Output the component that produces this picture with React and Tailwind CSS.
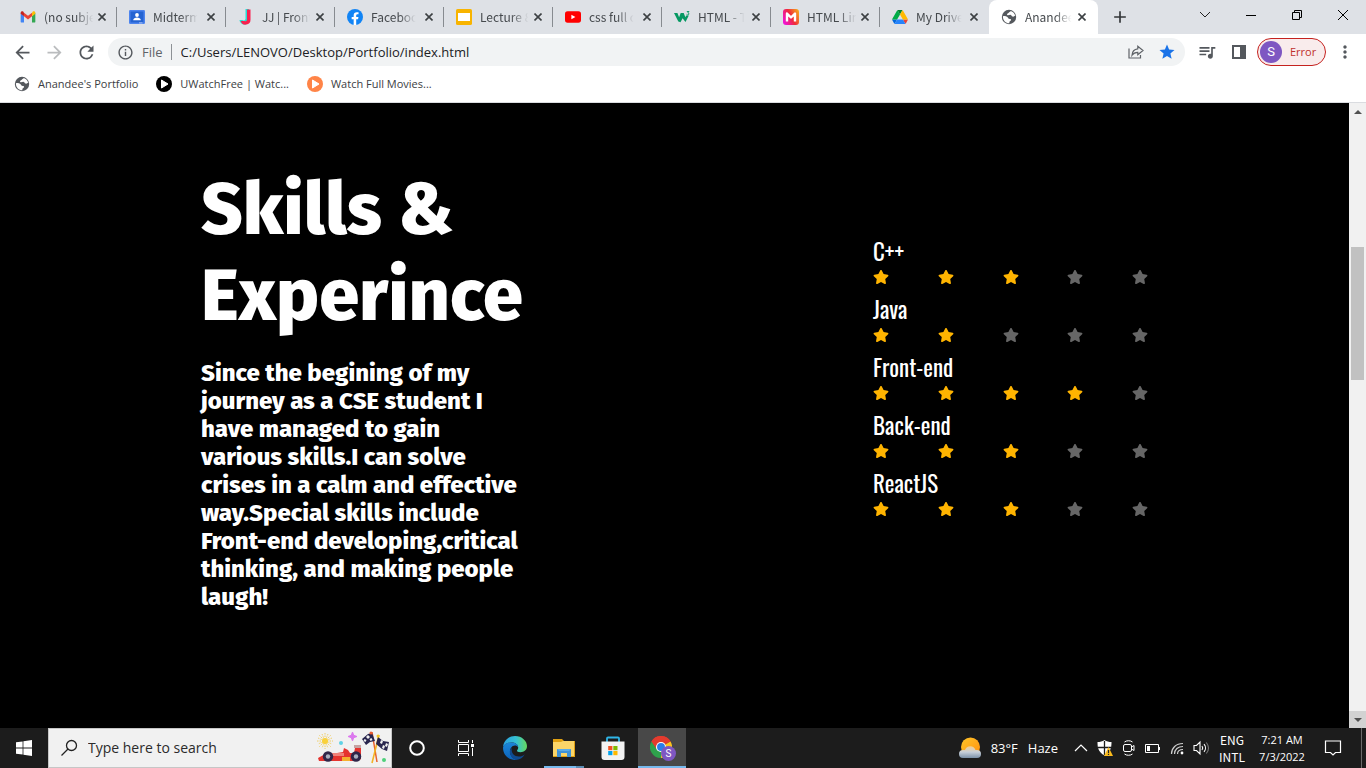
import React from "react";
import {
  MdAdd,
  MdArrowBack,
  MdArrowForward,
  MdInfoOutline,
  MdMoreVert,
  MdQueueMusic,
  MdRefresh,
  MdStar,
} from "react-icons/md";
import { FaStar } from "react-icons/fa";

/* ---------- favicons ---------- */

function Gmail() {
  return (
    <svg viewBox="0 0 24 24" className="size-4">
      <path d="M1 6v13c0 .8.6 1.400 1.400 1.400H6V11z" fill="#4285f4" />
      <path d="M23 6v13c0 .8-.6 1.400-1.400 1.400H18V11z" fill="#34a853" />
      <path d="M18 5.500V11l5-3.800V5.700c0-2-2.200-3.100-3.800-1.900z" fill="#fbbc04" />
      <path d="M6 11V5.500l6 4.500 6-4.500V11l-6 4.600z" fill="#ea4335" />
      <path d="M1 5.700v1.500L6 11V5.500L4.800 3.800C3.200 2.600 1 3.700 1 5.700z" fill="#c5221f" />
    </svg>
  );
}

function Classroom() {
  return (
    <svg viewBox="0 0 16 16" className="size-4">
      <rect y="1" width="16" height="14" rx="1.200" fill="#4d84ee" />
      <rect x="1.500" y="2.500" width="13" height="11" fill="#2463d2" />
      <circle cx="8" cy="6" r="1.900" fill="#fff" />
      <path d="M4.200 11.200c0-1.700 2-2.600 3.800-2.600s3.800.9 3.800 2.600z" fill="#fff" />
      <path d="M10 13.500h3.500v.8H10z" fill="#c6d7fa" />
    </svg>
  );
}

function LetterJ() {
  return (
    <svg viewBox="0 0 16 16" className="size-4">
      <path d="M7.500 0h3.500v10.500a4.500 4.500 0 0 1-9.500.5h3a2 2 0 0 0 3-1z" fill="#25e0d5" />
      <path d="M9 .5h3.500v10a5 5 0 0 1-9.800 1.500h3.800c1.300.9 2.500 0 2.500-1.800z" fill="#f9214f" />
    </svg>
  );
}

function Facebook() {
  return (
    <svg viewBox="0 0 24 24" className="size-4">
      <circle cx="12" cy="12" r="12" fill="#1184f5" />
      <path d="M16.600 15.500l.6-3.500h-3.400V9.800c0-1 .5-1.900 2-1.900h1.500v-3s-1.400-.2-2.700-.2c-2.800 0-4.600 1.700-4.600 4.700V12H7v3.500h3V24h3.800v-8.500z" fill="#fff" />
    </svg>
  );
}

function Slides() {
  return (
    <svg viewBox="0 0 16 16" className="size-4">
      <rect width="16" height="16" rx="1.600" fill="#f8b400" />
      <rect x="2" y="4" width="12" height="8" fill="#fff" />
    </svg>
  );
}

function YouTube() {
  return (
    <svg viewBox="0 0 16 16" className="size-4">
      <rect y="2.300" width="16" height="11.400" rx="2.600" fill="#f00" />
      <path d="M6.400 5.700v4.600l4-2.300z" fill="#fff" />
    </svg>
  );
}

function W3() {
  return (
    <svg viewBox="0 0 16 16" className="size-4">
      <path d="M0 4h3.400l1.700 4.200L6.700 4h3l1.700 4.200.8-1.700h2.600L11.500 13 8.600 9.200 6.500 13.200 4.300 12.500z" fill="#059862" />
      <path d="M12.800 2.500h2.200l-1.200 1.400c1.500 0 1.600 2-.1 2-.5 0-.9-.2-1.100-.5" fill="none" stroke="#059862" strokeWidth=".9" />
    </svg>
  );
}

function MBadge() {
  return (
    <svg viewBox="0 0 16 16" className="size-4">
      <defs>
        <linearGradient id="mBadge" x1="0" y1=".7" x2="1" y2=".2">
          <stop offset="0" stopColor="#f012d4" />
          <stop offset=".5" stopColor="#f02b3b" />
          <stop offset="1" stopColor="#f7a51b" />
        </linearGradient>
      </defs>
      <rect width="16" height="16" rx="3" fill="url(#mBadge)" />
      <path d="M4 12.500V4.500l4 4 4-4v8" fill="none" stroke="#fff" strokeWidth="2.400" strokeLinejoin="round" />
    </svg>
  );
}

function Drive() {
  return (
    <svg viewBox="0 0 87.300 78" className="h-[14px] w-4">
      <path d="m6.600 66.850 3.850 6.650c.8 1.400 1.950 2.500 3.300 3.300l13.750-23.800H0c0 1.550.4 3.100 1.200 4.500z" fill="#0066da" />
      <path d="M43.650 25 29.900 1.200c-1.350.8-2.500 1.900-3.300 3.300L1.200 48.500A9.060 9.060 0 0 0 0 53h27.500z" fill="#00ac47" />
      <path d="M73.550 76.800c1.350-.8 2.500-1.900 3.300-3.300l1.600-2.750L86.100 57.500c.8-1.400 1.200-2.950 1.200-4.500H59.800l5.850 11.500z" fill="#ea4335" />
      <path d="M43.650 25 57.400 1.200C56.050.4 54.500 0 52.900 0H34.400c-1.600 0-3.150.45-4.500 1.200z" fill="#00832d" />
      <path d="M59.800 53H27.500L13.750 76.800c1.350.8 2.900 1.200 4.500 1.200h50.800c1.600 0 3.150-.45 4.500-1.200z" fill="#2684fc" />
      <path d="m73.400 26.500-12.700-22c-.8-1.400-1.950-2.500-3.300-3.300L43.650 25 59.800 53h27.450c0-1.550-.4-3.100-1.200-4.500z" fill="#ffba00" />
    </svg>
  );
}

function Globe() {
  return (
    <svg viewBox="0 0 16 16" className="size-4">
      <circle cx="8" cy="8" r="7.200" fill="#54585d" />
      <path d="M8.200 3.200C9.300 2.600 9.800 2 9.700 1.900c2.300.7 4 2.500 4.500 4.700-.8.900-1.800 1.300-2.700 1-1-.4-.8-1.400-1.800-1.700-1.200-.3-1.900.6-3 .4-.9-.2-.9-1.300-.1-1.700.6-.3 1.200-.9 1.600-1.400z" fill="#fff" />
      <path d="M1.900 7.200c1.600-.3 3.400-.2 4.400.7.900.7.700 1.600 1.700 1.900 1 .3 1.900.1 2.100 1 .2 1-1.100 1.200-1.600 2-.3.500-.2 1 0 1.500-3.500.1-6.700-2.800-6.600-7.100z" fill="#fff" />
    </svg>
  );
}

function PlayDisc({ color }) {
  return (
    <svg viewBox="0 0 16 16" className="size-4">
      <circle cx="8" cy="8" r="8" fill={color} />
      <path d="M5.500 4v8L12 8z" fill="#fff" stroke="#fff" strokeLinejoin="round" />
    </svg>
  );
}

function CloseGlyph() {
  return (
    <svg viewBox="0 0 8 8" className="size-2">
      <path d="M.5.5l7 7M7.500.5l-7 7" stroke="#3c4043" strokeWidth="1.600" />
    </svg>
  );
}

/* ---------- browser ---------- */

const TABS = [
  { title: "(no subje", icon: <Gmail /> },
  { title: "Midterm", icon: <Classroom /> },
  { title: "JJ | Front", icon: <LetterJ /> },
  { title: "Faceboo", icon: <Facebook /> },
  { title: "Lecture 8", icon: <Slides /> },
  { title: "css full c", icon: <YouTube /> },
  { title: "HTML - T", icon: <W3 /> },
  { title: "HTML Lin", icon: <MBadge /> },
  { title: "My Drive", icon: <Drive /> },
  { title: "Anandee", icon: <Globe />, active: true },
];

function Tab({ tab, divider }) {
  return (
    <div
      className={
        tab.active
          ? "flex h-[34px] w-[109px] items-center rounded-t-lg bg-white pr-3 pl-3"
          : "relative flex h-[34px] w-[109px] items-center pr-[11px] pl-3"
      }
    >
      <button className="flex min-w-0 flex-1 items-center gap-2 text-left">
        <span className="flex size-4 shrink-0 items-center justify-center">{tab.icon}</span>
        <span className="flex-1 text-[12px] leading-4 whitespace-nowrap text-[#45494d] [mask-image:linear-gradient(to_right,#000_60%,transparent_95%)]">
          {tab.title}
        </span>
      </button>
      <button aria-label={"Close " + tab.title} className="ml-2 flex size-2 items-center justify-center">
        <CloseGlyph />
      </button>
      {divider && <span className="absolute top-[7px] right-0 h-5 w-px bg-[#878b90]" />}
    </div>
  );
}

function TabStrip() {
  return (
    <div className="flex h-[34px] items-center bg-[#dee1e6] pl-2 font-['Noto_Sans_CJK_SC',sans-serif]">
      <div className="flex">
        {TABS.map((tab, i) => (
          <Tab key={tab.title} tab={tab} divider={i < 8} />
        ))}
      </div>
      <button aria-label="New tab" className="ml-3 flex size-5 items-center justify-center text-[#333639]">
        <MdAdd className="size-5" />
      </button>
      <div className="mb-1 ml-auto flex">
        <button aria-label="Search tabs" className="flex h-6 w-[46px] items-center justify-center">
          <svg viewBox="0 0 12 8" className="h-2 w-3" fill="none" stroke="#222">
            <path d="M1 1l5 5 5-5" />
          </svg>
        </button>
        <button aria-label="Minimize" className="flex h-6 w-[46px] items-center justify-center">
          <svg viewBox="0 0 10 10" className="size-[10px]">
            <path d="M0 5.500h10" stroke="#000" />
          </svg>
        </button>
        <button aria-label="Restore" className="flex h-6 w-[46px] items-center justify-center">
          <svg viewBox="0 0 10 10" className="size-[10px]" fill="none" stroke="#000">
            <path d="M.5 2.500h7v7h-7zM2.500 2.500v-2h7v7h-2" />
          </svg>
        </button>
        <button aria-label="Close window" className="flex h-6 w-[46px] items-center justify-center">
          <svg viewBox="0 0 10 10" className="size-[10px]">
            <path d="M0 0l10 10M10 0L0 10" stroke="#000" />
          </svg>
        </button>
      </div>
    </div>
  );
}

function Toolbar() {
  return (
    <div className="flex h-9 items-center bg-white pr-3 pl-3 text-[#54585d]">
      <button aria-label="Back" className="flex w-5 justify-center">
        <MdArrowBack className="size-[21px] shrink-0" />
      </button>
      <button aria-label="Forward" className="ml-3 flex w-5 justify-center text-[#babcbe]">
        <MdArrowForward className="size-[21px] shrink-0" />
      </button>
      <button aria-label="Reload" className="ml-3 flex w-5 justify-center">
        <MdRefresh className="size-[21px] shrink-0" />
      </button>
      <div className="ml-3 flex h-7 flex-1 items-center rounded-full bg-[#f1f3f4] pr-[9px] pl-[9px]">
        <MdInfoOutline className="size-[17px]" />
        <span className="ml-2 text-[13px] leading-5 text-[#5f6368]">File</span>
        <span className="ml-2 h-4 w-px bg-[#8d9195]" />
        <input
          aria-label="Address"
          defaultValue="C:/Users/LENOVO/Desktop/Portfolio/index.html"
          className="ml-[9px] min-w-0 flex-1 bg-transparent text-[13px] leading-5 text-[#202124] outline-none"
        />
        <button aria-label="Share" className="flex w-4 justify-center">
          <svg viewBox="0 0 16 16" className="size-4" fill="none" stroke="#5f6368" strokeWidth="1.200">
            <path d="M1 4.500V14h11.500v-3" />
            <path d="M9.800 2.200v2.600C6 5.200 4.200 7.600 4 11.200c1.300-2 3.200-2.900 5.800-2.900v2.500L15 6.500z" />
          </svg>
        </button>
        <button aria-label="Bookmark this page" className="ml-[14px] flex w-[18px] justify-center text-[#1a73e8]">
          <MdStar className="size-[18px]" />
        </button>
      </div>
      <button aria-label="Media control" className="ml-3 flex w-5 justify-center">
        <MdQueueMusic className="size-5" />
      </button>
      <button aria-label="Side panel" className="ml-[14px] flex w-4 justify-center">
        <svg viewBox="0 0 16 16" className="size-4">
          <path d="M1 1h14v14H1z" fill="#54585d" />
          <path d="M3 3h6v10H3z" fill="#fff" />
        </svg>
      </button>
      <button className="ml-[10px] flex h-7 w-[69px] items-center rounded-full border border-[#c5221f] bg-[#f9ecec] pl-[2px]">
        <span className="flex size-[22px] items-center justify-center rounded-full bg-[#7e57c2] font-['Roboto',sans-serif] text-[13px] leading-4 text-white">
          S
        </span>
        <span className="ml-2 text-[11px] leading-4 text-[#c0312c]">Error</span>
      </button>
      <button aria-label="Menu" className="ml-[10px] flex w-[18px] justify-center">
        <MdMoreVert className="size-5 shrink-0" />
      </button>
    </div>
  );
}

function Bookmarks() {
  const items = [
    { label: "Anandee's Portfolio", icon: <Globe /> },
    { label: "UWatchFree | Watc...", icon: <PlayDisc color="#000" /> },
    { label: "Watch Full Movies...", icon: <PlayDisc color="#ff8447" /> },
  ];
  return (
    <nav className="flex h-[33px] items-center gap-[18px] border-b border-[#dadce0] bg-white pb-1 pl-[14px]">
      {items.map((b) => (
        <a key={b.label} href="#" className="flex items-center gap-2 text-[11px] leading-4 text-[#3c4043]">
          {b.icon}
          {b.label}
        </a>
      ))}
    </nav>
  );
}

/* ---------- portfolio page ---------- */

const SKILLS = [
  { name: "C++", score: 3 },
  { name: "Java", score: 2 },
  { name: "Front-end", score: 4 },
  { name: "Back-end", score: 3 },
  { name: "ReactJS", score: 3 },
];

function Portfolio() {
  return (
    <main className="flex flex-1 items-start justify-between bg-black px-[201px] pt-16 pb-16 text-white">
      <section className="w-[340px] font-['Fira_Sans','Noto_Sans',sans-serif] font-extrabold">
        <h1 className="text-[72px] leading-[86px]">
          Skills &amp;
          <br />
          Experince
        </h1>
        <p className="mt-5 text-[24px] leading-7 whitespace-nowrap">
          Since the begining of my
          <br />
          journey as a CSE student I
          <br />
          have managed to gain
          <br />
          various skills.I can solve
          <br />
          crises in a calm and effective
          <br />
          way.Special skills include
          <br />
          Front-end developing,critical
          <br />
          thinking, and making people
          <br />
          laugh!
        </p>
      </section>
      <ul className="mt-[66px] w-[275px]">
        {SKILLS.map((skill) => (
          <li key={skill.name} className="h-[58px]">
            <h2 className="font-['Oswald','Noto_Sans_CJK_SC',sans-serif] text-[23px] leading-9">{skill.name}</h2>
            <div className="flex justify-between" role="img" aria-label={skill.score + " of 5 stars"}>
              {[1, 2, 3, 4, 5].map((n) => (
                <FaStar key={n} className={n <= skill.score ? "size-4 text-[#ffb400]" : "size-4 text-[#666666]"} />
              ))}
            </div>
          </li>
        ))}
      </ul>
    </main>
  );
}

function Scrollbar() {
  return (
    <div className="flex w-[17px] shrink-0 flex-col bg-[#f1f1f1]" aria-hidden="true">
      <div className="flex h-[17px] items-center justify-center">
        <svg viewBox="0 0 8 4" className="h-1 w-2">
          <path d="M0 4l4-4 4 4z" fill="#505050" />
        </svg>
      </div>
      <div className="flex flex-1 flex-col items-center">
        <div className="basis-[21.5%]" />
        <div className="w-[13px] basis-[22.5%] bg-[#c1c1c1]" />
      </div>
      <div className="flex h-[17px] items-center justify-center bg-[#d2d2d2]">
        <svg viewBox="0 0 8 4" className="h-1 w-2">
          <path d="M0 0l4 4 4-4z" fill="#505050" />
        </svg>
      </div>
    </div>
  );
}

/* ---------- taskbar ---------- */

function RaceArt() {
  return (
    <svg viewBox="0 0 74 34" className="h-[34px] w-[74px]">
      <g stroke="#efc64a" strokeWidth=".8">
        <path d="M8 2v16M0 10h16M2.300 4.300l11.400 11.400M13.700 4.300L2.300 15.700M5 3l6 14M11 3L5 17M1 7l14 6M15 7L1 13" strokeDasharray="1.500 1" />
      </g>
      <circle cx="8" cy="10" r="3" fill="#f9d13c" />
      <path d="M35.500 1l1.200 3.300L40 5.500l-3.300 1.200-1.200 3.300-1.200-3.300L31 5.500l3.300-1.200z" fill="#dc78ee" stroke="#dc78ee" />
      <circle cx="24" cy="12" r="2" fill="#5fd2e6" />
      <path d="M1 27l9-5h10l6-1 1-4 4 2 2 3 4 0 1-5h6v11l-3 2H2z" fill="#e5342f" />
      <path d="M37 14h7v3h-7z" fill="#c6a3a3" />
      <path d="M14 22h13v3H14z" fill="#ef8178" />
      <path d="M25 26h8v4h-8z" fill="#f5b02f" />
      <circle cx="11" cy="25.500" r="5.200" fill="#302649" />
      <circle cx="11" cy="25.500" r="2.200" fill="#aab0c0" />
      <circle cx="39" cy="25.500" r="5.200" fill="#302649" />
      <circle cx="39" cy="25.500" r="2.200" fill="#aab0c0" />
      <path d="M55 1l5 30" stroke="#e8622c" strokeWidth="1.500" />
      <path d="M62 4l-7 28" stroke="#f3b324" strokeWidth="1.500" />
      <path d="M55 2l-4 1-6 5 4 6 4-3 5-1zM61 6l5 4 6 1-2 9-5-2-6-5z" fill="#28254d" />
      <path d="M51 4l2 2-2 2-2-2zM47.500 8l2 1-1 2-2-1zM54.500 7l1 2-2 1-1-2zM64 9l2 1-1 3-2-1zM69 12l2 1-1 3-2-1zM66 14l2 1-1 3-2-1z" fill="#f1f1f1" />
      <circle cx="54" cy="2" r="1.500" fill="#ee5b31" />
      <circle cx="61" cy="5" r="1.500" fill="#f3c524" />
      <circle cx="67" cy="29" r="2" fill="#4fd07a" />
    </svg>
  );
}

function EdgeLogo() {
  return (
    <svg viewBox="0 0 24 24" className="size-6">
      <defs>
        <linearGradient id="edgeTop" x1="0" y1=".4" x2="1" y2=".4">
          <stop offset="0" stopColor="#2a9fe0" />
          <stop offset=".55" stopColor="#35c1d3" />
          <stop offset="1" stopColor="#65d85c" />
        </linearGradient>
        <linearGradient id="edgeLow" x1="0" y1="0" x2="0" y2="1">
          <stop offset="0" stopColor="#1b86d8" />
          <stop offset="1" stopColor="#0c62ba" />
        </linearGradient>
      </defs>
      <path d="M0 11C.7 4.800 5.500 0 12 0c7 0 12 5 12 10 0 4-3 6.200-6.500 6.200-2.400 0-3.500-.8-3.500-1.500 0-.6 1.200-1.200 1.200-3.200 0-3-3-5-6.700-5C4.500 6.500 1.500 8.500 0 11z" fill="url(#edgeTop)" />
      <path d="M0 11.500C1 8.500 4 6.500 8.500 6.500c3.700 0 6.700 2 6.700 5-.6-1.500-2-2-3.200-2-3 0-5 3-5 6 0 4.500 3.500 8 7.500 8.200-1 .3-1.700.3-2.500.3-7 0-12-5.500-12-12.500z" fill="url(#edgeLow)" />
      <path d="M8.800 12c-1 5 2.700 8.500 7 8.500 2.500 0 4.500-.9 6-2.300C20 21.500 17 23.500 14 23.700c-4-.2-7.200-3.700-7.200-8.200 0-1.500.8-2.800 2-3.500z" fill="#0f4a90" />
    </svg>
  );
}

function FolderLogo() {
  return (
    <svg viewBox="0 0 22 18" className="h-[18px] w-[22px]">
      <path d="M0 0h9l2 2h11v16H0z" fill="#e0a012" />
      <path d="M0 3h8l2-1h11v15H0z" fill="#fbd568" />
      <path d="M4 10h14v8h-4v-4H8v4H4z" fill="#3f92d6" />
      <path d="M4 10h14l-2 2H6z" fill="#5aace8" />
    </svg>
  );
}

function StoreLogo() {
  return (
    <svg viewBox="0 0 24 24" className="size-6">
      <path d="M6 6V2.500C6 1.800 6.500 1.500 7 1.500h10c.6 0 1 .4 1 1V6" fill="none" stroke="#2fb6e8" strokeWidth="1.800" />
      <path d="M.5 5.500h23V21a3 3 0 0 1-3 3h-17a3 3 0 0 1-3-3z" fill="#f3f3f3" />
      <path d="M7.200 10h4.200v4.200H7.200z" fill="#f25022" />
      <path d="M12.300 10h4.200v4.200h-4.200z" fill="#7fba00" />
      <path d="M7.200 15h4.200v4.200H7.200z" fill="#00a4ef" />
      <path d="M12.300 15h4.200v4.200h-4.200z" fill="#ffb900" />
    </svg>
  );
}

function ChromeLogo() {
  return (
    <span className="relative flex size-6">
      <svg viewBox="0 0 24 24" className="size-[22px]">
        <path d="M12 12L1.600 6A12 12 0 0 1 22.400 6z" fill="#e33b2e" />
        <path d="M12 12l10.400-6A12 12 0 0 1 12 24z" fill="#fcc31e" />
        <path d="M12 12v12A12 12 0 0 1 1.600 6z" fill="#2ea24c" />
        <path d="M12 6.500h10.700A12 12 0 0 0 1.600 6l5.600 8.500z" fill="#e33b2e" />
        <circle cx="12" cy="12" r="5.500" fill="#fff" />
        <circle cx="12" cy="12" r="4.300" fill="#2b7de9" />
      </svg>
      <span className="absolute -right-[2px] -bottom-px flex size-[15px] items-center justify-center rounded-full bg-[#7e57c2] font-['Roboto',sans-serif] text-[10px] leading-3 text-white">
        S
      </span>
    </span>
  );
}

function TaskButton({ label, children, state }) {
  return (
    <button
      aria-label={label}
      className={
        state === "active"
          ? "relative flex h-10 w-12 items-center justify-center bg-[#484848]"
          : "relative flex h-10 w-12 items-center justify-center"
      }
    >
      {children}
      {state === "active" && <span className="absolute inset-x-0 bottom-0 h-[2px] bg-[#76b9ed]" />}
      {state === "open" && (
        <span className="absolute right-1 bottom-0 left-1 flex h-[2px]">
          <span className="flex-1 bg-[#76b9ed]" />
          <span className="w-2 bg-[#5a8cb3]" />
        </span>
      )}
    </button>
  );
}

function Taskbar() {
  return (
    <footer className="flex h-10 items-center bg-[#1c1c1c] text-white">
      <button aria-label="Start" className="flex h-10 w-12 items-center justify-center">
        <svg viewBox="0 0 16 16" className="size-4" fill="#fff">
          <path d="M0 2.300l6.600-.9v6.200H0zM7.400 1.300L16 0v7.600H7.400zM0 8.400h6.600v6.200L0 13.700zM7.400 8.400H16V16l-8.600-1.200z" />
        </svg>
      </button>
      <label className="flex h-10 w-[344px] items-center border border-[#c6c6c6] bg-[#f1f1f1] pl-[11px]">
        <svg viewBox="0 0 18 18" className="size-[18px] shrink-0" fill="none" stroke="#222" strokeWidth="1.300">
          <circle cx="11.500" cy="6.500" r="5" />
          <path d="M8 10l-6.500 6.500" />
        </svg>
        <input
          aria-label="Search"
          placeholder="Type here to search"
          className="ml-[10px] min-w-0 flex-1 bg-transparent text-[14px] leading-5 outline-none placeholder:text-[#2b2b2b]"
        />
        <RaceArt />
      </label>
      <div className="ml-px flex gap-px">
        <TaskButton label="Cortana">
          <svg viewBox="0 0 16 16" className="size-4">
            <circle cx="8" cy="8" r="6.800" fill="none" stroke="#fff" strokeWidth="2" />
          </svg>
        </TaskButton>
        <TaskButton label="Task view">
          <svg viewBox="0 0 16 16" className="size-4" fill="none" stroke="#fff">
            <path d="M.5 0v2.500h10V0M.5 4.500h10v7H.5zM.5 16v-2.500h10V16M14.500 0v3M14.500 8v8" />
            <path d="M13 4h3v3h-3z" fill="#fff" stroke="none" />
          </svg>
        </TaskButton>
        <TaskButton label="Edge"><EdgeLogo /></TaskButton>
        <TaskButton label="File Explorer" state="open"><FolderLogo /></TaskButton>
        <TaskButton label="Store"><StoreLogo /></TaskButton>
        <TaskButton label="Chrome" state="active"><ChromeLogo /></TaskButton>
      </div>

      <div className="ml-auto flex items-center">
        <button className="flex items-center text-[13px] leading-5">
          <svg viewBox="0 0 22 22" className="size-[22px]">
            <defs>
              <linearGradient id="sun" x1="0" y1="0" x2="1" y2="1">
                <stop offset="0" stopColor="#ffc629" />
                <stop offset="1" stopColor="#ff8f0e" />
              </linearGradient>
              <linearGradient id="haze" x1="0" y1="0" x2="0" y2="1">
                <stop offset="0" stopColor="#f6cf8e" />
                <stop offset=".5" stopColor="#c7cfd9" />
                <stop offset="1" stopColor="#7b91a8" />
              </linearGradient>
            </defs>
            <circle cx="11.500" cy="10" r="9.500" fill="url(#sun)" />
            <path d="M4 21a4 4 0 0 1 0-8h2a5.500 5.500 0 0 1 10.500 0h1.500a4 4 0 0 1 0 8z" fill="url(#haze)" />
          </svg>
          <span className="ml-[10px] whitespace-nowrap">83°F</span>
          <span className="ml-[10px]">Haze</span>
        </button>
        <div className="ml-4 flex items-center gap-[9px]">
          <button aria-label="Show hidden icons">
            <svg viewBox="0 0 14 8" className="h-2 w-[14px]" fill="none" stroke="#fff" strokeWidth="1.200">
              <path d="M1 7l6-6 6 6" />
            </svg>
          </button>
          <button aria-label="Security">
            <svg viewBox="0 0 16 16" className="size-4">
              <path d="M7.500 0C9.500 1.500 12 2 14.500 2c0 6-1 10-7 13.500C1.500 12 .5 8 .5 2 3 2 5.500 1.500 7.500 0z" fill="#fff" />
              <path d="M7.500 1v14M1 7.500h13" stroke="#1c1c1c" strokeWidth="1.300" />
              <path d="M11.500 7L16 16H7z" fill="#fbbc1d" />
              <path d="M11.500 10v3M11.500 13.800v1.200" stroke="#222" strokeWidth="1.200" />
            </svg>
          </button>
          <button aria-label="Meet now">
            <svg viewBox="0 0 14 16" className="h-4 w-[14px]" fill="none" stroke="#fff">
              <rect x="1.500" y="4.500" width="8" height="7" rx="1.500" />
              <path d="M9.500 7l2.500-1.500v5L9.500 9M2.500 2c2-1.700 6-1.700 8 0M2.500 14c2 1.700 6 1.700 8 0" />
            </svg>
          </button>
          <button aria-label="Battery">
            <svg viewBox="0 0 16 16" className="size-4" fill="none" stroke="#fff">
              <path d="M.5 4.500h13v8H.5zM14.500 7v3" />
              <path d="M2 6h3v5H2z" fill="#fff" stroke="none" />
            </svg>
          </button>
          <button aria-label="Wi-Fi">
            <svg viewBox="0 0 14 14" className="size-[14px]" fill="none" stroke="#d0d0d0" strokeWidth="1.200">
              <path d="M1.500 13C1.500 7 6 2.500 13 2.500M4.500 13c0-4.500 3.500-7.500 8.500-7.500M7.500 13c0-2.500 2-4.500 5.500-4.500" />
              <circle cx="12" cy="12" r="1.400" fill="#fff" stroke="none" />
            </svg>
          </button>
          <button aria-label="Volume">
            <svg viewBox="0 0 17 16" className="h-4 w-[17px]" fill="none" stroke="#fff" strokeWidth="1.100">
              <path d="M1 5.500h2.500L7 2v12l-3.500-3.500H1zM9 6c.9 1.200.9 2.800 0 4M11 4.200c2 2.200 2 5.400 0 7.600" />
              <path d="M13.300 2.500c2.700 3.300 2.700 7.700 0 11" stroke="#777" />
            </svg>
          </button>
        </div>
        <button className="ml-2 w-7 text-center font-['Noto_Sans_CJK_SC',sans-serif] text-[12px] leading-[17px]">
          ENG
          <br />
          INTL
        </button>
        <button className="ml-[6px] w-[60px] text-center text-[11px] leading-[17px]">
          7:21 AM
          <br />
          7/3/2022
        </button>
        <button aria-label="Notifications" className="ml-3">
          <svg viewBox="0 0 18 16" className="h-4 w-[18px]" fill="none" stroke="#fff" strokeWidth="1.200">
            <path d="M1.500 1h15v11.500h-5L9 15l-2.500-2.500h-5z" />
          </svg>
        </button>
        <button aria-label="Show desktop" className="ml-[19px] h-10 w-[5px] border-l border-[#6a6a6a]" />
      </div>
    </footer>
  );
}

export default function App() {
  return (
    <div className="flex min-h-screen flex-col bg-white font-['Open_Sans','Noto_Sans',sans-serif]">
      <header>
        <TabStrip />
        <Toolbar />
        <Bookmarks />
      </header>
      <div className="flex flex-1">
        <Portfolio />
        <Scrollbar />
      </div>
      <Taskbar />
    </div>
  );
}
